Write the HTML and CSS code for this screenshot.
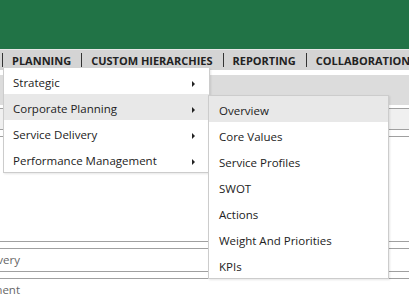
FILE: index.html
```html
<!DOCTYPE html>
<html lang="en">
<head>
  <meta charset="UTF-8">
  <title>Planning Menu</title>
  <link rel="stylesheet" href="styles.css">
</head>
<body>
  <div class="header"></div>
  <div class="nav">
    <span class="nav-item active">Planning</span>
    <span class="nav-item">Custom Hierarchies</span>
    <span class="nav-item">Reporting</span>
    <span class="nav-item">Collaboration</span>
  </div>

  <div class="page">
    <div class="band"></div>
    <div class="row-head"></div>
    <div class="spacer"></div>
    <div class="row"><span class="cut">Service Delivery</span></div>
    <div class="row"><span class="cut">Performance Management</span></div>

    <ul class="menu">
      <li>Strategic <i class="arrow"></i></li>
      <li class="hover">Corporate Planning <i class="arrow"></i></li>
      <li>Service Delivery <i class="arrow"></i></li>
      <li>Performance Management <i class="arrow"></i></li>
    </ul>

    <ul class="menu submenu">
      <li class="hover">Overview</li>
      <li>Core Values</li>
      <li>Service Profiles</li>
      <li>SWOT</li>
      <li>Actions</li>
      <li>Weight And Priorities</li>
      <li>KPIs</li>
    </ul>
  </div>
</body>
</html>
```

FILE: styles.css
```css
body {
  margin: 0;
  font-family: "Open Sans", "Noto Sans", sans-serif;
  color: #222;
  background: #fff;
  overflow: hidden;
}
.header {
  height: 49px;
  background: #217346;
  border-bottom: 1px solid #e6e6e6;
}
.nav {
  display: flex;
  height: 20px;
  background: #d4d4d4;
  padding-left: 2px;
}
.nav-item {
  border-left: 1px solid #333;
  margin: 3px 0 3px;
  padding: 1px 10px 0 9px;
  font-size: 11px;
  font-weight: bold;
  line-height: 13px;
  text-transform: uppercase;
  white-space: nowrap;
}
.page {
  position: relative;
  padding-top: 5px;
}
.band {
  height: 30px;
  background: #dcdcdc;
}
.row-head {
  margin-top: 3px;
  height: 20px;
  background: #f0f0f0;
  border-top: 1px solid #a0a0a0;
  border-bottom: 1px solid #a0a0a0;
}
.spacer {
  height: 104px;
  border-top: 1px solid #a0a0a0;
  border-bottom: 1px solid #a0a0a0;
  margin-top: 6px;
}
.row {
  height: 22px;
  margin-top: 6px;
  border-top: 1px solid #a0a0a0;
  border-bottom: 1px solid #a0a0a0;
  font-size: 11.5px;
  line-height: 22px;
  color: #666;
  white-space: nowrap;
}
.row:last-child {
  border-bottom: none;
}
.cut {
  display: inline-block;
  width: 220px;
  margin-left: -200px;
  text-align: right;
}
.menu {
  position: absolute;
  top: -2px;
  left: 3px;
  width: 205px;
  margin: 0;
  padding: 0;
  list-style: none;
  background: #fff;
  border: 1px solid #ccc;
  border-top: none;
  box-shadow: 1px 1px 2px rgba(0, 0, 0, 0.1);
}
.menu li {
  display: flex;
  align-items: center;
  justify-content: space-between;
  height: 24px;
  padding: 2px 14px 0 9px;
  font-size: 11.5px;
}
.menu li.hover {
  background: #e8e8e8;
}
.arrow {
  width: 0;
  height: 0;
  border-top: 3px solid transparent;
  border-bottom: 3px solid transparent;
  border-left: 3px solid #222;
  margin-top: 3px;
}
.submenu {
  top: 25px;
  left: 208px;
  width: 179px;
  border-top: 1px solid #ccc;
}
.submenu li {
  padding-left: 10px;
}
```
